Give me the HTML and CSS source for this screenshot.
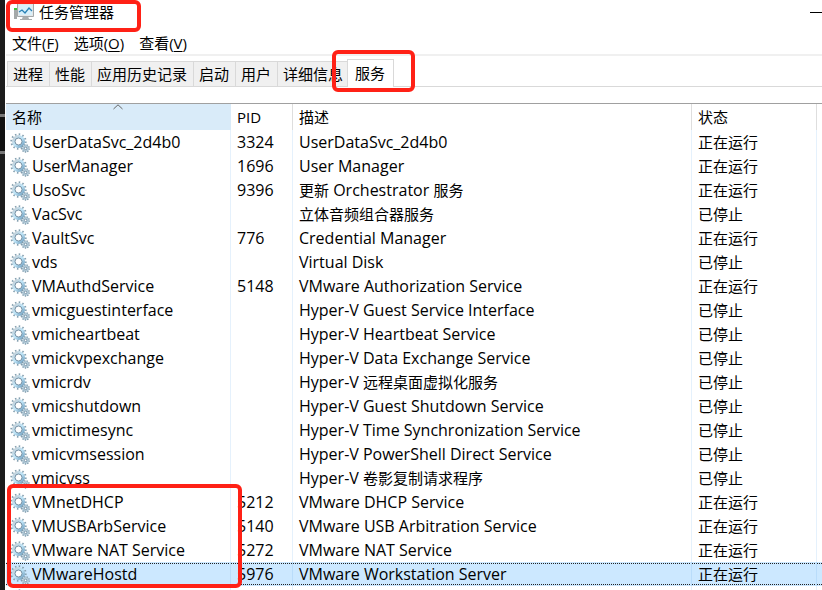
FILE: index.html
```html
<!DOCTYPE html>
<html lang="zh-CN">
<head>
<meta charset="utf-8">
<title>任务管理器</title>
<link rel="stylesheet" href="styles.css">
</head>
<body>
<svg class="defs" aria-hidden="true">
  <defs>
    <linearGradient id="steel" x1="0" y1="0" x2="1" y2="1"><stop offset="0" stop-color="#c3ced5"/><stop offset=".5" stop-color="#c0e6f9"/><stop offset="1" stop-color="#6d9dbe"/></linearGradient>
  </defs>
  <symbol id="gears" viewBox="0 0 20 20">
    <circle cx="8.5" cy="8.5" r="7.2" fill="none" stroke="#86a1b1" stroke-width="2" stroke-dasharray="1.5 2.27"/>
    <circle cx="8.5" cy="8.5" r="5" fill="none" stroke="url(#steel)" stroke-width="3"/>
    <circle cx="8.5" cy="8.5" r="3.5" fill="#fff" stroke="#64839a" stroke-width=".9"/>
    <circle cx="15.6" cy="15.4" r="3.6" fill="#d3e5ef" stroke="#7f99aa" stroke-width="1.4" stroke-dasharray="1.3 1.2"/>
    <circle cx="15.6" cy="15.4" r="2.6" fill="#cfe3ee" stroke="#90acbd" stroke-width=".6"/>
    <circle cx="15.6" cy="15.4" r="1.3" fill="#fff" stroke="#587a92" stroke-width=".8"/>
  </symbol>
</svg>
<div class="desktop">
  <div class="edge"></div>
  <main class="window">
    <header class="titlebar">
      <svg class="app-icon" viewBox="0 0 20 18" aria-hidden="true">
        <path d="M0 5h3v11H0z" fill="#a5a9a9"/><path d="M0 5h3v2H0z" fill="#3fc43a"/>
        <path d="M9 13h5l1 3h3v1H6v-1h2z" fill="#a9adae"/>
        <path d="M3.500 .5h16v13h-16z" fill="#e4e7e8" stroke="#a3a8aa"/>
        <path d="M5 2h13v10H5z" fill="#d8f0fb"/>
        <path d="M5 9l3-2 3 3 4-5 3 3" fill="none" stroke="#2a82b5" stroke-width="1.300"/>
      </svg>
      <h1>任务管理器</h1>
      <button class="minimize" aria-label="最小化"></button>
    </header>
    <nav class="menu">
      <button>文件(<u>F</u>)</button>
      <button>选项(<u>O</u>)</button>
      <button>查看(<u>V</u>)</button>
    </nav>
    <div class="tabs" role="tablist">
      <button role="tab">进程</button>
      <button role="tab">性能</button>
      <button role="tab">应用历史记录</button>
      <button role="tab">启动</button>
      <button role="tab">用户</button>
      <button role="tab" class="wide">详细信息</button>
      <button role="tab" class="active" aria-selected="true">服务</button>
    </div>
    <table class="services">
      <colgroup><col class="c-name"><col class="c-pid"><col class="c-desc"><col class="c-state"><col class="c-rest"></colgroup>
      <thead>
        <tr><th class="sorted">名称<svg class="sort" viewBox="0 0 10 6" aria-hidden="true"><path d="M.5 5 5 .8 9.500 5" fill="none" stroke="#666"/></svg></th><th>PID</th><th>描述</th><th>状态</th><th></th></tr>
      </thead>
      <tbody>
        <tr><td><svg><use href="#gears"/></svg>UserDataSvc_2d4b0</td><td>3324</td><td>UserDataSvc_2d4b0</td><td><span>正在运行</span></td><td></td></tr>
        <tr><td><svg><use href="#gears"/></svg>UserManager</td><td>1696</td><td>User Manager</td><td><span>正在运行</span></td><td></td></tr>
        <tr><td><svg><use href="#gears"/></svg>UsoSvc</td><td>9396</td><td><span>更新</span> Orchestrator <span>服务</span></td><td><span>正在运行</span></td><td></td></tr>
        <tr><td><svg><use href="#gears"/></svg>VacSvc</td><td></td><td><span>立体音频组合器服务</span></td><td><span>已停止</span></td><td></td></tr>
        <tr><td><svg><use href="#gears"/></svg>VaultSvc</td><td>776</td><td>Credential Manager</td><td><span>正在运行</span></td><td></td></tr>
        <tr><td><svg><use href="#gears"/></svg>vds</td><td></td><td>Virtual Disk</td><td><span>已停止</span></td><td></td></tr>
        <tr><td><svg><use href="#gears"/></svg>VMAuthdService</td><td>5148</td><td>VMware Authorization Service</td><td><span>正在运行</span></td><td></td></tr>
        <tr><td><svg><use href="#gears"/></svg>vmicguestinterface</td><td></td><td>Hyper-V Guest Service Interface</td><td><span>已停止</span></td><td></td></tr>
        <tr><td><svg><use href="#gears"/></svg>vmicheartbeat</td><td></td><td>Hyper-V Heartbeat Service</td><td><span>已停止</span></td><td></td></tr>
        <tr><td><svg><use href="#gears"/></svg>vmickvpexchange</td><td></td><td>Hyper-V Data Exchange Service</td><td><span>已停止</span></td><td></td></tr>
        <tr><td><svg><use href="#gears"/></svg>vmicrdv</td><td></td><td>Hyper-V <span>远程桌面虚拟化服务</span></td><td><span>已停止</span></td><td></td></tr>
        <tr><td><svg><use href="#gears"/></svg>vmicshutdown</td><td></td><td>Hyper-V Guest Shutdown Service</td><td><span>已停止</span></td><td></td></tr>
        <tr><td><svg><use href="#gears"/></svg>vmictimesync</td><td></td><td>Hyper-V Time Synchronization Service</td><td><span>已停止</span></td><td></td></tr>
        <tr><td><svg><use href="#gears"/></svg>vmicvmsession</td><td></td><td>Hyper-V PowerShell Direct Service</td><td><span>已停止</span></td><td></td></tr>
        <tr><td><svg><use href="#gears"/></svg>vmicvss</td><td></td><td>Hyper-V <span>卷影复制请求程序</span></td><td><span>已停止</span></td><td></td></tr>
        <tr><td><svg><use href="#gears"/></svg>VMnetDHCP</td><td>5212</td><td>VMware DHCP Service</td><td><span>正在运行</span></td><td></td></tr>
        <tr><td><svg><use href="#gears"/></svg>VMUSBArbService</td><td>5140</td><td>VMware USB Arbitration Service</td><td><span>正在运行</span></td><td></td></tr>
        <tr><td><svg><use href="#gears"/></svg>VMware NAT Service</td><td>5272</td><td>VMware NAT Service</td><td><span>正在运行</span></td><td></td></tr>
        <tr class="selected"><td><svg><use href="#gears"/></svg>VMwareHostd</td><td>5976</td><td>VMware Workstation Server</td><td><span>正在运行</span></td><td></td></tr>
        <tr><td><svg><use href="#gears"/></svg></td><td></td><td></td><td></td><td></td></tr>
      </tbody>
    </table>
  </main>
  <div class="mark mark-title"></div>
  <div class="mark mark-tab"></div>
  <div class="mark mark-rows"></div>
</div>
</body>
</html>
```
FILE: styles.css
```css
* { box-sizing: border-box; }
body {
  margin: 0;
  background: #fff;
  color: #000;
  font: 15px/24px "Open Sans", "Noto Sans CJK SC", sans-serif;
}
button {
  margin: 0;
  padding: 0;
  border: 0;
  background: none;
  color: inherit;
  font: inherit;
  white-space: nowrap;
}
.defs { position: absolute; width: 0; height: 0; }
.desktop { position: relative; display: flex; height: 100vh; overflow: hidden; }
.edge {
  flex: 0 0 5px;
  background: linear-gradient(#1c1c1c 114px, #777 114px 117px, #111 117px 151px, #777 151px 154px, #1c1c1c 154px);
}
.window { flex: 1; min-width: 0; padding-left: 1px; }
.titlebar { display: flex; align-items: center; height: 31px; padding: 0 0 7px 8px; }
.app-icon { width: 20px; height: 18px; margin-right: 5px; }
h1 { margin: 0; font-size: 15px; font-weight: 400; }
.minimize { width: 12px; height: 1px; margin-left: auto; background: #000; }
.menu { display: flex; gap: 15px; height: 25px; padding-left: 6px; border-bottom: 2px solid #f0f0f0; }
.menu button { height: 24px; }
.menu u { text-underline-offset: 2px; }
.tabs { display: flex; align-items: flex-end; height: 31px; padding-left: 1px; border-bottom: 1px solid #d9d9d9; }
.tabs button {
  height: 25px;
  padding: 0 6px 0 5px;
  border: 1px solid #d9d9d9;
  border-width: 1px 0 0 1px;
  background: #f0f0f0;
}
.tabs .wide { padding-right: 4px; }
.tabs .active { height: 28px; padding: 0 8px 2px 7px; margin-bottom: -1px; border-right-width: 1px; background: #fff; }
.services {
  width: 100%;
  margin-top: 16px;
  border-top: 1px solid #a0a0a0;
  border-spacing: 0;
  table-layout: fixed;
}
.c-name { width: 225px; }
.c-pid { width: 62px; }
.c-state { width: 125px; }
.c-rest { width: 5px; }
th, td {
  height: 24px;
  padding: 0 0 0 6px;
  border-right: 1px solid #e5f1fc;
  font-weight: 400;
  text-align: left;
  white-space: nowrap;
}
th { height: 26px; border-color: #dedede; }
th:last-child, td:last-child { padding: 0; border-right: 0; }
.sorted { position: relative; border-color: #d9ebf9; background: #d9ebf9; }
.sort { position: absolute; top: 0; left: 50%; width: 10px; height: 6px; margin-left: -5px; }
td:first-child { padding-left: 4px; }
td svg { width: 20px; height: 20px; margin-right: 2px; vertical-align: -5px; }
td { font-size: 16px; line-height: 20px; }
td span { font-size: 15px; }
.selected td {
  border-right-color: #b9dcfa;
  background:
    repeating-linear-gradient(90deg, #222 0 1px, transparent 1px 2px) 0 1px / 100% 1px no-repeat border-box,
    repeating-linear-gradient(90deg, #222 0 1px, transparent 1px 2px) 0 22px / 100% 1px no-repeat border-box,
    #cce8ff;
}
.mark { position: absolute; border: 4px solid #ff2116; border-radius: 6px; }
.mark-title { left: 6px; top: 0; width: 135px; height: 32px; }
.mark-tab { left: 332px; top: 50px; width: 83px; height: 42px; }
.mark-rows { left: 7px; top: 484px; width: 235px; height: 104px; }
```
